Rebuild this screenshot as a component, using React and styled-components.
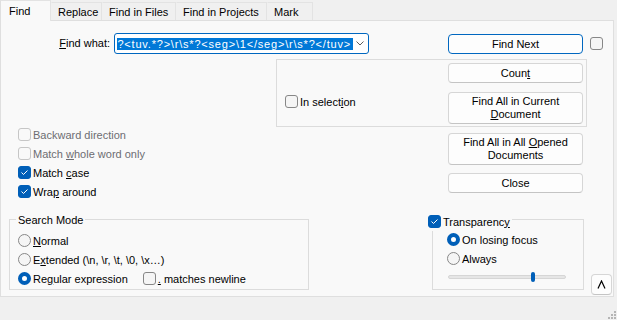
import React from 'react'
import styled, { createGlobalStyle } from 'styled-components'

const GlobalStyle = createGlobalStyle`
  html, body {
    margin: 0;
    padding: 0;
    background: #f0f0f0;
  }
  body {
    font-family: "Liberation Sans", Arial, sans-serif;
    font-size: 11px;
    color: #1a1a1a;
  }
`;

const Window = styled.div`
  position: relative;
  width: 617px;
  height: 320px;
  overflow: hidden;
  background: #f0f0f0;
`;

const TabBar = styled.div`
  position: relative;
  z-index: 1;
  display: flex;
  align-items: flex-end;
  height: 20px;
`;

const Tab = styled.div`
  box-sizing: border-box;
  width: ${p => p.$w}px;
  height: ${p => (p.$active ? 21 : 18)}px;
  margin-bottom: ${p => (p.$active ? -1 : 0)}px;
  padding-left: ${p => (p.$active ? 8 : 6)}px;
  display: flex;
  align-items: center;
  background: ${p => (p.$active ? '#f9f9f9' : '#f0f0f0')};
  border: 1px solid #e3e3e3;
  border-bottom: none;
  border-left-color: ${p => (p.$active ? '#dfdfdf' : 'transparent')};
  color: #000;
  white-space: nowrap;
`;

const Page = styled.div`
  box-sizing: border-box;
  width: 614px;
  height: 277px;
  padding-top: 12px;
  border: 1px solid #dfdfdf;
  background: #f9f9f9;
  display: flex;
  flex-direction: column;
`;

const TopRow = styled.div`
  display: flex;
  align-items: flex-start;
  height: 21px;
`;

const FieldLabel = styled.label`
  width: 109px;
  line-height: 20px;
  text-align: right;
  color: #000;
`;

const Combo = styled.div`
  box-sizing: border-box;
  width: 255px;
  height: 21px;
  margin-left: 4px;
  padding: 0 4px 0 1px;
  display: flex;
  align-items: center;
  border: 1px solid #0067c0;
  border-radius: 3px;
  background: #fff;
`;

const ComboText = styled.div`
  flex: 1;
  min-width: 0;
  overflow: hidden;
  display: flex;
  justify-content: flex-end;
`;

const Highlight = styled.span`
  flex-shrink: 0;
  padding: 0 2px 0 0;
  line-height: 12px;
  letter-spacing: 0.8px;
  white-space: pre;
  background: #0078d7;
  color: #fff;
`;

const Chevron = styled.svg`
  flex-shrink: 0;
  margin-left: 3px;
  width: 8px;
  height: 5px;
`;

const Button = styled.button`
  box-sizing: border-box;
  width: 135px;
  height: ${p => (p.$tall ? 32 : 20)}px;
  margin: 0;
  padding: 0;
  font: inherit;
  line-height: 13px;
  color: #000;
  text-align: center;
  background: #fdfdfd;
  border: 1px solid ${p => (p.$primary ? '#0067c0' : '#d6d6d6')};
  border-bottom-color: ${p => (p.$primary ? '#0067c0' : '#c4c4c4')};
  border-radius: 4px;
`;

const TopButton = styled(Button)`
  margin: 1px 0 0 79px;
`;

const U = styled.span`
  text-decoration: underline;
  text-underline-offset: 1px;
`;

const Row = styled.label`
  display: flex;
  align-items: center;
  height: 19px;
  gap: 2px;
  white-space: nowrap;
  color: ${p => (p.$disabled ? '#6d6d72' : '#000')};
`;

const Box = styled.span`
  box-sizing: border-box;
  flex-shrink: 0;
  width: 13px;
  height: 13px;
  border-radius: 3px;
  border: 1px solid ${p => (p.$on ? '#005fb8' : p.$disabled ? '#c6c6c6' : '#878787')};
  background: ${p => (p.$on ? '#005fb8' : p.$disabled ? '#f9f9f9' : '#f5f5f5')};
  display: flex;
  align-items: center;
  justify-content: center;
`;

const Dot = styled.span`
  box-sizing: border-box;
  flex-shrink: 0;
  width: 13px;
  height: 13px;
  border-radius: 50%;
  border: ${p => (p.$on ? '4px solid #005fb8' : '1px solid #878787')};
  background: ${p => (p.$on ? '#fff' : '#f5f5f5')};
`;

const Check = ({ on, disabled, children }) => (
  <Row $disabled={disabled}>
    <Box $on={on} $disabled={disabled}>
      {on && (
        <svg width="11" height="11" viewBox="0 0 11 11">
          <polyline points="2.5,5.5 4.5,7.5 8.5,3.5" fill="none" stroke="#fff" strokeWidth="1" />
        </svg>
      )}
    </Box>
    <span>{children}</span>
  </Row>
);

const Radio = ({ on, children }) => (
  <Row>
    <Dot $on={on} />
    <span>{children}</span>
  </Row>
);

const TopCheck = styled.div`
  margin: 4px 0 0 7px;
`;

const Middle = styled.div`
  display: flex;
  margin-top: 5px;
`;

const Options = styled.div`
  box-sizing: border-box;
  width: 275px;
  padding: 66px 0 0 17px;
  display: flex;
  flex-direction: column;
`;

const RightSide = styled.div`
  display: flex;
  flex-direction: column;
`;

const SelectionGroup = styled.div`
  box-sizing: border-box;
  width: 311px;
  height: 68px;
  padding: 3px 3px 0 8px;
  display: flex;
  border: 1px solid #dcdcdc;
`;

const SelectionCheck = styled.div`
  margin-top: 29px;
`;

const ButtonStack = styled.div`
  display: flex;
  flex-direction: column;
  gap: ${p => p.$gap}px;
  margin-left: ${p => (p.$offset ? `${p.$offset}px` : 'auto')};
  margin-top: ${p => p.$top || 0}px;
`;

const Bottom = styled.div`
  display: flex;
  align-items: flex-start;
  margin-top: 18px;
`;

const GroupBox = styled.div`
  position: relative;
  box-sizing: border-box;
  width: ${p => p.$w}px;
  height: 71px;
  margin-left: ${p => p.$left}px;
  padding: ${p => p.$pad};
  display: flex;
  flex-direction: column;
  border: 1px solid #dcdcdc;
`;

const Caption = styled.div`
  position: absolute;
  top: -8px;
  left: ${p => p.$left}px;
  padding: 0 2px;
  line-height: 16px;
  background: #f9f9f9;
  color: #000;
`;

const InlineCheck = styled.div`
  margin-left: 15px;
`;

const RegexRow = styled.div`
  display: flex;
  align-items: center;
`;

const Slider = styled.div`
  position: relative;
  width: 118px;
  height: 10px;
  margin: 4px 0 0 1px;
`;

const Track = styled.div`
  box-sizing: border-box;
  margin-top: 3px;
  height: 4px;
  border: 1px solid #d6d6d6;
  border-radius: 2px;
  background: #e6e6e6;
`;

const Thumb = styled.div`
  position: absolute;
  top: 0;
  width: 4px;
  height: 10px;
  border-radius: 2px;
  background: #005fb8;
`;

const CollapseButton = styled.button`
  box-sizing: border-box;
  width: 21px;
  height: 21px;
  margin: 55px 0 0 7px;
  padding: 0;
  display: flex;
  align-items: center;
  justify-content: center;
  background: #fdfdfd;
  border: 1px solid #d6d6d6;
  border-bottom-color: #c4c4c4;
  border-radius: 4px;
`;

const Grip = styled.svg`
  position: absolute;
  right: 0;
  bottom: 0;
`;

const tabs = [
  { label: 'Find', w: 51, active: true },
  { label: 'Replace', w: 51 },
  { label: 'Find in Files', w: 74 },
  { label: 'Find in Projects', w: 91 },
  { label: 'Mark', w: 46 },
];

const sliderValue = 0.7;

export default function App() {
  return (
    <Window>
      <GlobalStyle />
      <TabBar>
        {tabs.map(t => (
          <Tab key={t.label} $w={t.w} $active={t.active}>
            {t.label}
          </Tab>
        ))}
      </TabBar>
      <Page>
        <TopRow>
          <FieldLabel>
            <U>F</U>ind what:
          </FieldLabel>
          <Combo>
            <ComboText>
              <Highlight>{'?<tuv.*?>\\r\\s*?<seg>\\1</seg>\\r\\s*?</tuv>'}</Highlight>
            </ComboText>
            <Chevron viewBox="0 0 8 5">
              <polyline points="0.5,0.5 4,4 7.5,0.5" fill="none" stroke="#5c5c5c" strokeWidth="1" />
            </Chevron>
          </Combo>
          <TopButton $primary>Find Next</TopButton>
          <TopCheck>
            <Box />
          </TopCheck>
        </TopRow>

        <Middle>
          <Options>
            <Check disabled>Backward direction</Check>
            <Check disabled>
              Match <U>w</U>hole word only
            </Check>
            <Check on>
              Match <U>c</U>ase
            </Check>
            <Check on>
              Wra<U>p</U> around
            </Check>
          </Options>
          <RightSide>
            <SelectionGroup>
              <SelectionCheck>
                <Check>
                  In select<U>i</U>on
                </Check>
              </SelectionCheck>
              <ButtonStack $gap={9}>
                <Button>
                  Coun<U>t</U>
                </Button>
                <Button $tall>
                  Find All in Current
                  <br />
                  <U>D</U>ocument
                </Button>
              </ButtonStack>
            </SelectionGroup>
            <ButtonStack $gap={8} $offset={172} $top={6}>
              <Button $tall>
                Find All in All <U>O</U>pened
                <br />
                Documents
              </Button>
              <Button>Close</Button>
            </ButtonStack>
          </RightSide>
        </Middle>

        <Bottom>
          <GroupBox $w={300} $left={8} $pad="11px 0 0 8px">
            <Caption $left={6}>Search Mode</Caption>
            <Radio>
              <U>N</U>ormal
            </Radio>
            <Radio>
              E<U>x</U>tended (\n, \r, \t, \0, \x…)
            </Radio>
            <RegexRow>
              <Radio on>
                Re<U>g</U>ular expression
              </Radio>
              <InlineCheck>
                <Check>
                  <U>.</U> matches newline
                </Check>
              </InlineCheck>
            </RegexRow>
          </GroupBox>

          <GroupBox $w={152} $left={123} $pad="10px 0 0 14px">
            <Caption $left={-7}>
              <Check on>
                Transparenc<U>y</U>
              </Check>
            </Caption>
            <Radio on>On losing focus</Radio>
            <Radio>Always</Radio>
            <Slider>
              <Track />
              <Thumb style={{ left: `${Math.round(sliderValue * 118)}px` }} />
            </Slider>
          </GroupBox>

          <CollapseButton>
            <svg width="9" height="9" viewBox="0 0 9 9">
              <polyline points="1,8.5 4.5,1 8,8.5" fill="none" stroke="#000" strokeWidth="1.2" />
            </svg>
          </CollapseButton>
        </Bottom>
      </Page>
      <Grip width="11" height="11" viewBox="0 0 11 11">
        <g fill="#b5b5b5">
          <rect x="8" y="2" width="2" height="2" />
          <rect x="5" y="5" width="2" height="2" />
          <rect x="8" y="5" width="2" height="2" />
          <rect x="2" y="8" width="2" height="2" />
          <rect x="5" y="8" width="2" height="2" />
          <rect x="8" y="8" width="2" height="2" />
        </g>
      </Grip>
    </Window>
  )
}
